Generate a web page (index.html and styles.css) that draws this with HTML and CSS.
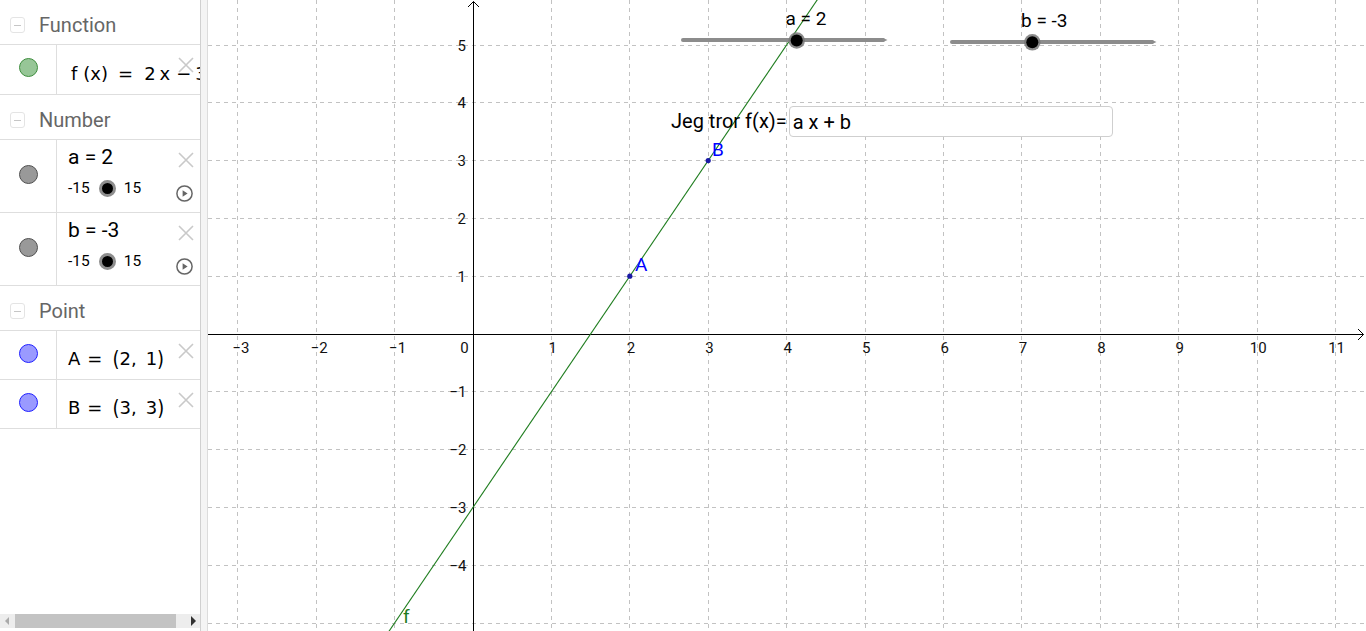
FILE: index.html
```html
<!DOCTYPE html>
<html lang="no">
<head>
<meta charset="utf-8">
<title>GeoGebra</title>
<link rel="stylesheet" href="styles.css">
</head>
<body>
<div class="app">
  <aside class="algebra">
    <div class="group"><span class="toggle"><span class="bar"></span></span><span class="gtitle">Function</span></div>
    <div class="item fnrow">
      <div class="mark"><span class="dot green"></span></div>
      <div class="content">
        <div class="math"><span class="m3">f</span><span class="g6">(x)</span><span class="g10">=</span><span class="g11">2</span><span class="g4">x</span><span class="g6">−</span><span class="g4">3</span></div>
      </div>
      <svg class="del" viewBox="0 0 16 16"><path d="M1 1L15 15M15 1L1 15"/></svg>
    </div>

    <div class="group"><span class="toggle"><span class="bar"></span></span><span class="gtitle">Number</span></div>
    <div class="item numrow">
      <div class="mark"><span class="dot gray"></span></div>
      <div class="content">
        <div class="var">a = 2</div>
        <div class="srow"><span>-15</span><span class="knob"></span><span>15</span></div>
      </div>
      <svg class="del" viewBox="0 0 16 16"><path d="M1 1L15 15M15 1L1 15"/></svg>
      <svg class="play" viewBox="0 0 17 17"><circle cx="8.5" cy="8.5" r="7.6"/><path class="tri" d="M6.6 5.2L11.6 8.5L6.6 11.8Z"/></svg>
    </div>
    <div class="item numrow">
      <div class="mark"><span class="dot gray"></span></div>
      <div class="content">
        <div class="var">b = -3</div>
        <div class="srow"><span>-15</span><span class="knob"></span><span>15</span></div>
      </div>
      <svg class="del" viewBox="0 0 16 16"><path d="M1 1L15 15M15 1L1 15"/></svg>
      <svg class="play" viewBox="0 0 17 17"><circle cx="8.5" cy="8.5" r="7.6"/><path class="tri" d="M6.6 5.2L11.6 8.5L6.6 11.8Z"/></svg>
    </div>

    <div class="group"><span class="toggle"><span class="bar"></span></span><span class="gtitle">Point</span></div>
    <div class="item ptrow">
      <div class="mark"><span class="dot blue"></span></div>
      <div class="content">
        <div class="math"><span>A</span><span class="g7">=</span><span class="g10 par">(</span><span>2,</span><span class="g9">1</span><span class="par">)</span></div>
      </div>
      <svg class="del" viewBox="0 0 16 16"><path d="M1 1L15 15M15 1L1 15"/></svg>
    </div>
    <div class="item ptrow">
      <div class="mark"><span class="dot blue"></span></div>
      <div class="content">
        <div class="math"><span>B</span><span class="g7">=</span><span class="g10 par">(</span><span>3,</span><span class="g9">3</span><span class="par">)</span></div>
      </div>
      <svg class="del" viewBox="0 0 16 16"><path d="M1 1L15 15M15 1L1 15"/></svg>
    </div>

    <div class="hscroll"><span class="arrow-l"></span><span class="thumb"></span><span class="arrow-r"></span></div>
  </aside>
  <div class="splitter"></div>
  <main class="graphics">
    <svg class="plot" width="1158" height="631" viewBox="208 0 1158 631">
      <path class="grid" d="M237.5 0V631M316.5 0V631M394.5 0V631M551.5 0V631M629.5 0V631M708.5 0V631M786.5 0V631M865.5 0V631M943.5 0V631M1021.5 0V631M1100.5 0V631M1178.5 0V631M1257.5 0V631M1335.5 0V631M208 45.5H1366M208 102.5H1366M208 160.5H1366M208 218.5H1366M208 276.5H1366M208 391.5H1366M208 449.5H1366M208 507.5H1366M208 565.5H1366M208 623.5H1366"/>
      <path class="axis" d="M208 334.5H1363.5M473.5 631V1.5M1358 329l5.5 5.5-5.5 5.5M468 7l5.5-5.5 5.5 5.5"/>
      <g class="ax">
        <text x="241" y="352.5">−3</text>
        <text x="319.2" y="352.5">−2</text>
        <text x="397.6" y="352.5">−1</text>
        <text x="464.5" y="352.5">0</text>
        <text x="552.6" y="352.5">1</text>
        <text x="631" y="352.5">2</text>
        <text x="709.4" y="352.5">3</text>
        <text x="787.8" y="352.5">4</text>
        <text x="866.2" y="352.5">5</text>
        <text x="944.6" y="352.5">6</text>
        <text x="1023" y="352.5">7</text>
        <text x="1101.4" y="352.5">8</text>
        <text x="1179.8" y="352.5">9</text>
        <text x="1258.2" y="352.5">10</text>
        <text x="1336.6" y="352.5">11</text>
      </g>
      <g class="ay">
        <text x="466" y="50.5">5</text>
        <text x="466" y="108.3">4</text>
        <text x="466" y="166.1">3</text>
        <text x="466" y="223.9">2</text>
        <text x="466" y="281.7">1</text>
        <text x="466.5" y="397.3">−1</text>
        <text x="466.5" y="455.1">−2</text>
        <text x="466.5" y="512.9">−3</text>
        <text x="466.5" y="570.7">−4</text>
      </g>
      <line class="fline" x1="386.76" y1="634.56" x2="821.88" y2="-7.02"/>
      <text class="flabel" x="403" y="623">f</text>
      <circle class="pt" cx="629.8" cy="276.2" r="2.6"/>
      <circle class="pt" cx="708.2" cy="160.6" r="2.6"/>
      <text class="plabel" x="635" y="271">A</text>
      <text class="plabel" x="712" y="156">B</text>

      <line class="track" x1="683" y1="40" x2="883" y2="40"/>
      <path class="tip" d="M883 38L887.5 40L883 42Z"/>
      <circle class="ring" cx="796.7" cy="40.5" r="8.3"/>
      <circle class="core" cx="796.7" cy="40.5" r="6"/>
      <text class="slabel" x="785.5" y="25">a = 2</text>

      <line class="track" x1="952" y1="42" x2="1152" y2="42"/>
      <path class="tip" d="M1152 40L1156.5 42L1152 44Z"/>
      <circle class="ring" cx="1032.3" cy="42.3" r="8.3"/>
      <circle class="core" cx="1032.3" cy="42.3" r="6"/>
      <text class="slabel" x="1021" y="27">b = -3</text>
    </svg>
    <div class="prompt">
      <span class="prompt-label">Jeg tror f(x)=</span>
      <span class="field">a x + b</span>
    </div>
  </main>
</div>
</body>
</html>
```
FILE: styles.css
```css
html, body {
  margin: 0;
  padding: 0;
  background: #fff;
}
body {
  overflow: hidden;
  font-family: Roboto, "Liberation Sans", sans-serif;
  color: #000;
}
.app {
  display: flex;
  width: 1366px;
  height: 631px;
}

/* ---------- algebra view ---------- */
.algebra {
  width: 200px;
  flex: none;
  border-right: 1px solid #d0d0d0;
  display: flex;
  flex-direction: column;
  overflow: hidden;
}
.group {
  flex: none;
  height: 38px;
  padding-top: 6px;
  border-bottom: 1px solid #dedede;
  display: flex;
  align-items: center;
}
.toggle {
  flex: none;
  width: 13px;
  height: 14px;
  margin-left: 10px;
  border: 1px solid #e4e4e4;
  border-radius: 3px;
  display: flex;
  align-items: center;
  justify-content: center;
}
.toggle .bar {
  width: 7px;
  height: 1px;
  background: #c6c6c6;
}
.gtitle {
  margin-left: 14px;
  font-size: 20px;
  color: #666;
}
.item {
  flex: none;
  display: flex;
  position: relative;
  border-bottom: 1px solid #dedede;
}
.fnrow { height: 49px; }
.numrow { height: 72px; }
.ptrow { height: 48px; }
.mark {
  width: 56px;
  flex: none;
  border-right: 1px solid #dedede;
  display: flex;
  align-items: center;
  justify-content: center;
}
.dot {
  width: 17px;
  height: 17px;
  border-radius: 50%;
  border: 1px solid;
  margin-bottom: 4px;
}
.dot.green { background: #97c697; border-color: #3e8e3e; }
.dot.gray { background: #999; border-color: #505050; }
.dot.blue { background: #9a9aff; border-color: #2020ff; }
.content {
  padding-left: 11px;
  white-space: nowrap;
}
.math {
  display: flex;
  font-family: "DejaVu Sans", sans-serif;
  font-size: 18px;
  line-height: 24px;
  padding-top: 16px;
}
.fnrow .math { padding-top: 17px; }
.math .par { transform: scaleY(1.18); display: inline-block; }
.m3 { margin-left: 3px; }
.g4 { margin-left: 4px; }
.g6 { margin-left: 6px; }
.g7 { margin-left: 7px; }
.g9 { margin-left: 9px; }
.g10 { margin-left: 10px; }
.g11 { margin-left: 11px; }
.var {
  font-size: 21px;
  line-height: 24px;
  padding-top: 5px;
}
.srow {
  display: flex;
  align-items: center;
  height: 20px;
  margin-top: 9px;
  font-size: 15.5px;
}
.knob {
  width: 11px;
  height: 11px;
  background: #000;
  border: 3px solid #8e8e8e;
  border-radius: 50%;
  margin: 0 8px 0 9px;
}
.del {
  position: absolute;
  top: 12px;
  right: 6px;
  width: 16px;
  height: 16px;
  fill: none;
  stroke: #c9c9c9;
  stroke-width: 1.6;
}
.play {
  position: absolute;
  top: 45px;
  right: 7px;
  width: 17px;
  height: 17px;
}
.play circle {
  fill: none;
  stroke: #666;
  stroke-width: 1.5;
}
.play .tri { fill: #666; }
.hscroll {
  flex: none;
  margin-top: auto;
  margin-bottom: 3px;
  height: 14px;
  background: #ededed;
  display: flex;
  align-items: center;
}
.arrow-l {
  width: 0;
  height: 0;
  margin-left: 5px;
  border-top: 4px solid transparent;
  border-bottom: 4px solid transparent;
  border-right: 4px solid #aaa;
}
.thumb {
  width: 161px;
  height: 14px;
  margin-left: 6px;
  background: #c3c3c3;
}
.arrow-r {
  width: 0;
  height: 0;
  margin-left: 15px;
  border-top: 5px solid transparent;
  border-bottom: 5px solid transparent;
  border-left: 5px solid #333;
}
.splitter {
  width: 6px;
  flex: none;
  background: #f4f4f4;
  border-right: 1px solid #dcdcdc;
}

/* ---------- graphics view ---------- */
.graphics {
  position: relative;
  flex: 1;
  overflow: hidden;
}
.plot {
  display: block;
}
.grid {
  fill: none;
  stroke: #c2c2c2;
  stroke-width: 1;
  stroke-dasharray: 4 4;
}
.axis {
  fill: none;
  stroke: #000;
  stroke-width: 1;
}
.ax text, .ay text {
  font-family: Roboto, "Liberation Sans", sans-serif;
  font-size: 15px;
  fill: #111;
}
.ax text { text-anchor: middle; }
.ay text { text-anchor: end; }
.fline {
  stroke: #1f7d1f;
  stroke-width: 1.1;
}
.flabel {
  font-family: Roboto, "Liberation Sans", sans-serif;
  font-size: 19px;
  fill: #1f7a1f;
}
.pt { fill: #1a1aa6; }
.plabel {
  font-family: Roboto, "Liberation Sans", sans-serif;
  font-size: 19px;
  fill: #0000ff;
}
.track {
  stroke: #8c8c8c;
  stroke-width: 4;
  stroke-linecap: round;
}
.tip { fill: #8c8c8c; }
.ring { fill: #777; opacity: 0.85; }
.core { fill: #000; }
.slabel {
  font-family: Roboto, "Liberation Sans", sans-serif;
  font-size: 19px;
  fill: #000;
}
.prompt {
  position: absolute;
  left: 463px;
  top: 106px;
  display: flex;
  align-items: flex-start;
  font-size: 20px;
}
.prompt-label {
  line-height: 31px;
  white-space: nowrap;
}
.field {
  width: 319px;
  height: 29px;
  margin-left: 2px;
  padding-left: 3px;
  line-height: 30px;
  border: 1px solid #cfcfcf;
  border-radius: 4px;
  background: #fff;
  white-space: nowrap;
}
```
